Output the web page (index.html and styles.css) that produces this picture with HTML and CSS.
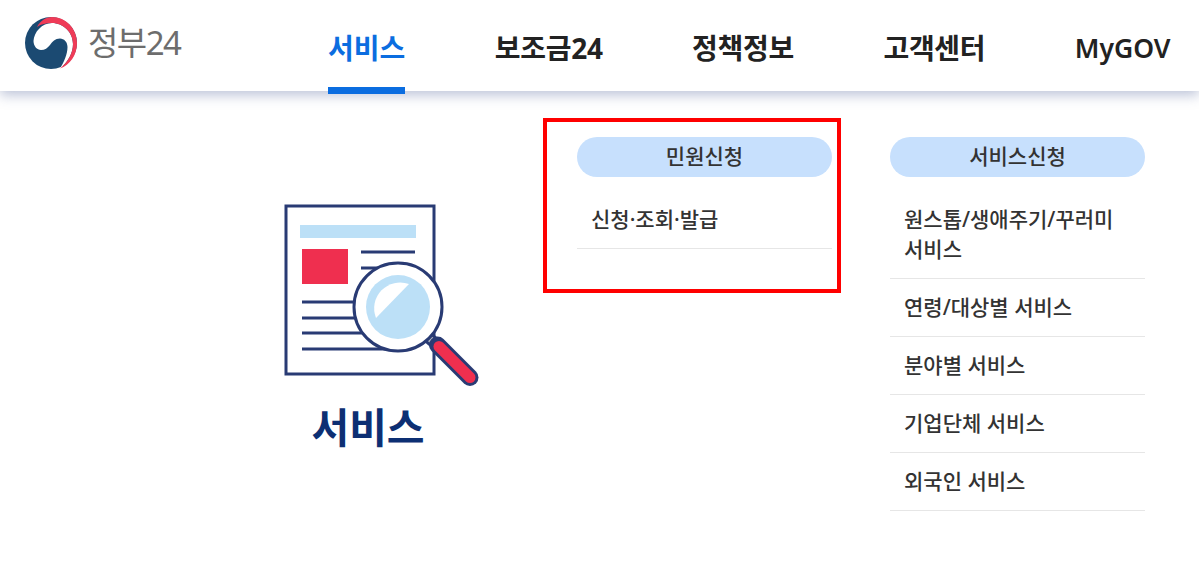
FILE: index.html
```html
<!DOCTYPE html>
<html lang="ko">
<head>
  <meta charset="UTF-8">
  <title>정부24 서비스</title>
  <link rel="stylesheet" href="styles.css">
</head>
<body>
  <header class="header">
    <div class="logo">
      <svg class="logo-mark" width="54" height="54" viewBox="0 0 54 54">
        <circle cx="27" cy="27" r="26" fill="#1b4a72"/>
        <path d="M9.5 25 C10 16 18 7 28 7 C39 7 49 16 49 28 C49 37 44 46 36 52.5 C40 46 43.5 38 43.5 31 C43.5 26 40 22.5 36 22.5 C31 22.5 28.5 25.5 26 29 C23.5 32 21 34 17 34 C13 34 9.5 30 9.5 25 Z" fill="#fff"/>
        <path d="M13 11 C16 5 22 1 28 1 C42 1 53 13 53 27 C53 39 46 49 36 52.5 C44 46 49 37 49 28 C49 16 39 7 28 7 C22 7 17 8 13 11 Z" fill="#ef3b57"/>
      </svg>
      <span class="logo-text">정부24</span>
    </div>
    <nav class="nav">
      <a class="nav-item active">서비스</a>
      <a class="nav-item">보조금24</a>
      <a class="nav-item">정책정보</a>
      <a class="nav-item">고객센터</a>
      <a class="nav-item nav-item-en">MyGOV</a>
    </nav>
  </header>

  <main class="menu">
    <div class="intro">
      <svg class="intro-icon" width="200" height="186" viewBox="0 0 200 186">
        <rect x="2" y="2" width="148" height="168" fill="#fff" stroke="#293b74" stroke-width="3"/>
        <rect x="16" y="21" width="116" height="13" fill="#bce0f7"/>
        <rect x="18" y="45" width="46" height="35" fill="#ef2f4f"/>
        <g stroke="#293b74" stroke-width="3">
          <path d="M77 48 H131"/>
          <path d="M77 64 H131"/>
          <path d="M18 98 H120"/>
          <path d="M18 114 H120"/>
          <path d="M18 129 H120"/>
          <path d="M18 145 H120"/>
        </g>
        <path d="M145 134 L153 141" stroke="#293b74" stroke-width="12"/>
        <path d="M145 134 L153 141" stroke="#b9bdc6" stroke-width="6"/>
        <path d="M153.5 141 L186 173.5" stroke="#293b74" stroke-width="17" stroke-linecap="round"/>
        <path d="M155 142.5 L186 173.5" stroke="#ef2f4f" stroke-width="11" stroke-linecap="round"/>
        <circle cx="114" cy="103" r="44" fill="#fff" stroke="#293b74" stroke-width="3"/>
        <circle cx="114" cy="103" r="32" fill="#bce0f7"/>
        <path d="M125 80 A26 26 0 0 0 92 114 Z" fill="#fff"/>
      </svg>
      <h1 class="intro-title">서비스</h1>
    </div>

    <section class="column">
      <h2 class="column-title">민원신청</h2>
      <ul class="links">
        <li>신청·조회·발급</li>
      </ul>
      <div class="highlight"></div>
    </section>

    <section class="column">
      <h2 class="column-title">서비스신청</h2>
      <ul class="links">
        <li>원스톱/생애주기/꾸러미 서비스</li>
        <li>연령/대상별 서비스</li>
        <li>분야별 서비스</li>
        <li>기업단체 서비스</li>
        <li>외국인 서비스</li>
      </ul>
    </section>
  </main>
</body>
</html>
```

FILE: styles.css
```css
* {
  box-sizing: border-box;
}

body {
  margin: 0;
  background-color: #fff;
  color: #222;
  font-family: "Noto Sans", "Noto Sans CJK KR", sans-serif;
}

.header {
  display: flex;
  height: 91px;
  padding-left: 24px;
  box-shadow: 0 4px 12px rgba(60, 80, 140, 0.35);
  position: relative;
}

.logo {
  display: flex;
  align-items: flex-start;
  width: 304px;
  padding-top: 16px;
}

.logo-text {
  margin-left: 10px;
  margin-top: 3px;
  font-size: 33px;
  line-height: 48px;
  color: #6d6d6d;
  letter-spacing: -1.5px;
}

.nav {
  display: flex;
  gap: 89.5px;
}

.nav-item {
  height: 94px;
  padding-top: 26px;
  font-size: 28px;
  line-height: 44px;
  font-weight: 700;
  color: #222;
  letter-spacing: -0.3px;
  white-space: nowrap;
  border-bottom: 7px solid transparent;
}

.nav-item.active {
  color: #0b6de0;
  letter-spacing: 0;
  border-bottom-color: #0b6de0;
}

.nav-item-en {
  font-size: 26.5px;
  font-weight: 600;
  letter-spacing: 0;
}

.menu {
  display: flex;
  padding-top: 46px;
  padding-left: 285px;
}

.intro {
  flex: 0 0 292px;
  padding-top: 67px;
}

.intro-icon {
  display: block;
  margin-left: -1px;
}

.intro-title {
  width: 166px;
  margin: 11px 0 0;
  text-align: center;
  font-size: 41px;
  line-height: 52px;
  font-weight: 700;
  color: #0d2f73;
}

.column {
  position: relative;
  flex: 0 0 255px;
}

.column + .column {
  margin-left: 58px;
}

.column-title {
  margin: 0;
  height: 40px;
  border-radius: 20px;
  background-color: #c7e0fd;
  text-align: center;
  font-size: 21px;
  line-height: 38px;
  font-weight: 500;
  color: #333;
}

.links {
  list-style: none;
  margin: 14px 0 0;
  padding: 0;
}

.links li {
  padding: 13px 14px 14px;
  border-bottom: 1px solid #e6e6e6;
  font-size: 21px;
  line-height: 30px;
  font-weight: 500;
  color: #333;
  word-break: keep-all;
}

.highlight {
  position: absolute;
  top: -19px;
  left: -34px;
  width: 298px;
  height: 175px;
  border: 4px solid #f00;
  pointer-events: none;
}
```
